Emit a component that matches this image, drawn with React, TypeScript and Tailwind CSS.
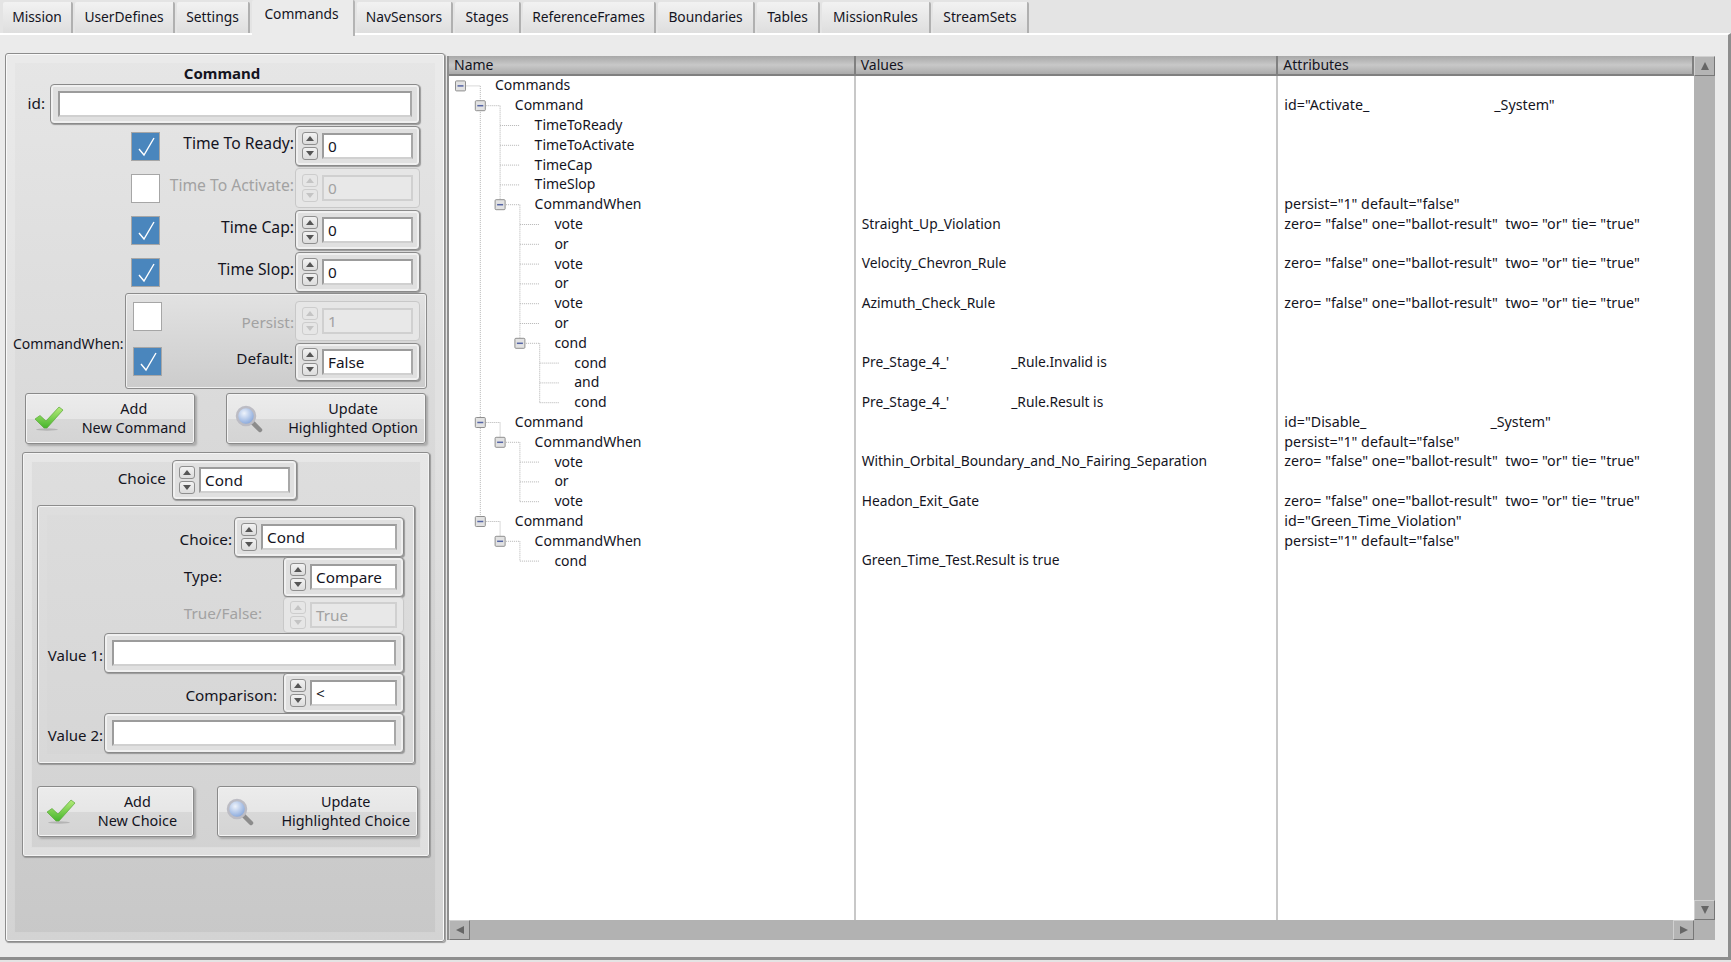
import type { ReactNode } from "react"

const tabs = [
  { label: "Mission", width: "w-[70px]" },
  { label: "UserDefines", width: "w-[100px]" },
  { label: "Settings", width: "w-[73px]" },
  { label: "Commands", width: "w-[103px]", active: true },
  { label: "NavSensors", width: "w-[96px]" },
  { label: "Stages", width: "w-[66px]" },
  { label: "ReferenceFrames", width: "w-[133px]" },
  { label: "Boundaries", width: "w-[97px]" },
  { label: "Tables", width: "w-[63px]" },
  { label: "MissionRules", width: "w-[109px]" },
  { label: "StreamSets", width: "w-[96px]" },
]

const voteAttr = 'zero= "false" one="ballot-result"  two= "or" tie= "true"'
const persistAttr = 'persist="1" default="false"'

interface TreeRow {
  name: string
  depth: number
  open?: boolean
  value?: ReactNode
  attr?: ReactNode
}

function Gap({ width }: { width: number }) {
  return <span className="inline-block" style={{ width }} />
}

const rows: TreeRow[] = [
  { name: "Commands", depth: 0, open: true },
  { name: "Command", depth: 1, open: true, attr: <>id="Activate_<Gap width={125} />_System"</> },
  { name: "TimeToReady", depth: 2 },
  { name: "TimeToActivate", depth: 2 },
  { name: "TimeCap", depth: 2 },
  { name: "TimeSlop", depth: 2 },
  { name: "CommandWhen", depth: 2, open: true, attr: persistAttr },
  { name: "vote", depth: 3, value: "Straight_Up_Violation", attr: voteAttr },
  { name: "or", depth: 3 },
  { name: "vote", depth: 3, value: "Velocity_Chevron_Rule", attr: voteAttr },
  { name: "or", depth: 3 },
  { name: "vote", depth: 3, value: "Azimuth_Check_Rule", attr: voteAttr },
  { name: "or", depth: 3 },
  { name: "cond", depth: 3, open: true },
  { name: "cond", depth: 4, value: <>Pre_Stage_4_'<Gap width={62} />_Rule.Invalid is</> },
  { name: "and", depth: 4 },
  { name: "cond", depth: 4, value: <>Pre_Stage_4_'<Gap width={62} />_Rule.Result is</> },
  { name: "Command", depth: 1, open: true, attr: <>id="Disable_<Gap width={124} />_System"</> },
  { name: "CommandWhen", depth: 2, open: true, attr: persistAttr },
  { name: "vote", depth: 3, value: "Within_Orbital_Boundary_and_No_Fairing_Separation", attr: voteAttr },
  { name: "or", depth: 3 },
  { name: "vote", depth: 3, value: "Headon_Exit_Gate", attr: voteAttr },
  { name: "Command", depth: 1, open: true, attr: 'id="Green_Time_Violation"' },
  { name: "CommandWhen", depth: 2, open: true, attr: persistAttr },
  { name: "cond", depth: 3, value: "Green_Time_Test.Result is true" },
]

const ROW_H = 19.8
const INDENT = 19.8
const BOX_X = 11.5

function TreeLines() {
  const cy = (i: number) => ROW_H / 2 + ROW_H * i
  const lines: ReactNode[] = []
  rows.forEach((row, i) => {
    const x = BOX_X + INDENT * row.depth
    lines.push(<line key={`h${i}`} x1={x} y1={cy(i)} x2={x + 20} y2={cy(i)} />)
    if (!row.open) return
    let last = i
    for (let j = i + 1; j < rows.length && rows[j].depth > row.depth; j++) {
      if (rows[j].depth === row.depth + 1) last = j
    }
    lines.push(<line key={`v${i}`} x1={x + INDENT} y1={cy(i)} x2={x + INDENT} y2={cy(last)} />)
  })
  return (
    <svg className="absolute left-0 top-0" width="300" height="520">
      <g stroke="#b4b4b4" strokeWidth="1" strokeDasharray="1 1">{lines}</g>
      {rows.map((row, i) =>
        row.open ? (
          <g key={i}>
            <rect x={BOX_X + INDENT * row.depth - 5} y={cy(i) - 5} width="10" height="10" rx="1" fill="#e2e2e2" stroke="#8f8f8f" />
            <line x1={BOX_X + INDENT * row.depth - 3} y1={cy(i)} x2={BOX_X + INDENT * row.depth + 3} y2={cy(i)} stroke="#5565a5" strokeWidth="1.5" />
          </g>
        ) : null
      )}
    </svg>
  )
}

function Arrows({ disabled }: { disabled?: boolean }) {
  const box = disabled
    ? "border-[#cdcdcd] bg-[#e6e6e6]"
    : "border-[#8f8f8f] bg-gradient-to-b from-[#f2f2f2] to-[#dcdcdc]"
  const fill = disabled ? "#c4c4c4" : "#555555"
  return (
    <div className="flex w-[16px] shrink-0 flex-col gap-[2px]">
      <div className={`flex h-[13px] items-center justify-center rounded-[3px] border ${box}`}>
        <svg width="8" height="5"><path d="M4 0 L8 5 L0 5 Z" fill={fill} /></svg>
      </div>
      <div className={`flex h-[13px] items-center justify-center rounded-[3px] border ${box}`}>
        <svg width="8" height="5"><path d="M0 0 L8 0 L4 5 Z" fill={fill} /></svg>
      </div>
    </div>
  )
}

function Field({ value, disabled, className = "" }: { value?: string; disabled?: boolean; className?: string }) {
  return (
    <div
      className={`flex h-[26px] items-center border-2 pl-[4px] text-[15.3px] ${
        disabled
          ? "border-[#d0d0d0] bg-[#e8e8e8] text-[#a2a2a2]"
          : "border-[#9c9c9c] border-b-[#d0d0d0] border-r-[#a8a8a8] bg-white"
      } ${className}`}
    >
      {value}
    </div>
  )
}

function Frame({ children, disabled, className = "" }: { children: ReactNode; disabled?: boolean; className?: string }) {
  return (
    <div
      className={`flex items-center rounded-[4px] border ${
        disabled
          ? "border-[#c8c8c8] bg-[#e6e6e6]"
          : "border-[#8a8a8a] bg-[#e0e0e0] shadow-[inset_0_0_0_2px_#f0f0f0,1px_1px_1px_#999999]"
      } ${className}`}
    >
      {children}
    </div>
  )
}

function Spin({ value, disabled, className = "w-[125px]" }: { value: string; disabled?: boolean; className?: string }) {
  return (
    <Frame disabled={disabled} className={`h-full shrink-0 gap-[4px] px-[6px] ${className}`}>
      <Arrows disabled={disabled} />
      <Field value={value} disabled={disabled} className="min-w-0 flex-1" />
    </Frame>
  )
}

function TextBox({ className }: { className: string }) {
  return (
    <Frame className={`h-full shrink-0 px-[7px] ${className}`}>
      <Field className="flex-1" />
    </Frame>
  )
}

function Check({ checked, className = "" }: { checked?: boolean; className?: string }) {
  return (
    <div
      className={`flex h-[29px] w-[29px] shrink-0 items-center justify-center border border-[#a6a6a6] ${
        checked ? "bg-[#4a86bd]" : "bg-white"
      } ${className}`}
    >
      {checked && (
        <svg width="24" height="24" viewBox="0 0 24 24" fill="none" stroke="#ffffff" strokeWidth="1.4">
          <path d="M5 15 L10 21 L20 4" />
        </svg>
      )}
    </div>
  )
}

function GreenCheck() {
  return (
    <svg width="30" height="26" viewBox="0 0 30 26">
      <defs>
        <linearGradient id="gc" x1="0" y1="0" x2="0" y2="1">
          <stop offset="0" stopColor="#b6ec7a" />
          <stop offset="1" stopColor="#46b52c" />
        </linearGradient>
      </defs>
      <ellipse cx="13" cy="23.5" rx="11" ry="1.2" fill="#b4b4b4" />
      <path d="M1 13 L6 9.5 L12 15 L25 1 L29 4 L13 22 L10 22 Z" fill="url(#gc)" stroke="#5aa83a" strokeWidth="0.7" />
    </svg>
  )
}

function Magnifier() {
  return (
    <svg width="30" height="28" viewBox="0 0 30 28">
      <defs>
        <radialGradient id="mg" cx="0.4" cy="0.35" r="0.7">
          <stop offset="0" stopColor="#eef3fb" />
          <stop offset="1" stopColor="#7c9fd8" />
        </radialGradient>
      </defs>
      <path d="M17 17 L25 25" stroke="#8c8c8c" strokeWidth="4.5" strokeLinecap="round" />
      <circle cx="11" cy="11" r="9" fill="url(#mg)" stroke="#bcbcc4" strokeWidth="2.5" />
    </svg>
  )
}

function ActionButton({
  icon,
  top,
  bottom,
  className,
}: {
  icon: ReactNode
  top: string
  bottom: string
  className: string
}) {
  return (
    <div
      className={`flex h-[51px] shrink-0 items-center rounded-[3px] border border-[#8a8a8a] bg-[linear-gradient(#ececec_0%,#e6e6e6_52%,#d8d8d8_52%,#d4d4d4_100%)] pl-[8px] text-[14.4px] shadow-[inset_0_0_0_1px_#f4f4f4,2px_2px_2px_#aaaaaa] ${className}`}
    >
      {icon}
      <div className="ml-auto flex flex-col items-center leading-[18.6px]">
        <span>{top}</span>
        <span>{bottom}</span>
      </div>
    </div>
  )
}

function TimeRow({ label, checked, disabled }: { label: string; checked?: boolean; disabled?: boolean }) {
  return (
    <div className="flex h-[40px] items-center">
      <Check checked={checked} className="ml-[125px]" />
      <span className={`flex-1 pb-[5px] pr-[1px] text-right text-[15.7px] ${disabled ? "text-[#a2a2a2]" : ""}`}>{label}</span>
      <Spin value="0" disabled={disabled} />
    </div>
  )
}

function ScrollButton({ dir }: { dir: "up" | "down" | "left" | "right" }) {
  const shape = {
    up: "M5 1 L9 9 L1 9 Z",
    down: "M1 1 L9 1 L5 9 Z",
    left: "M1 5 L9 1 L9 9 Z",
    right: "M1 1 L9 5 L1 9 Z",
  }[dir]
  return (
    <div className="flex h-[20px] w-[21px] shrink-0 items-center justify-center border border-[#d0d0d0] border-b-[#777777] border-r-[#777777] bg-[#b4b4b4]">
      <svg width="10" height="10"><path d={shape} fill="#666666" /></svg>
    </div>
  )
}

export default function App() {
  return (
    <div className="flex h-[962px] w-[1731px] flex-col overflow-hidden bg-[#e4e4e4] font-['Noto_Sans',sans-serif] text-[14px] text-[#14141e]">
      <div className="flex h-[33px] shrink-0 items-end gap-[2px] pl-[3px] text-[13.8px]">
        {tabs.map((t) =>
          t.active ? (
            <div
              key={t.label}
              className={`relative z-10 -mb-[3px] flex h-[36px] items-center justify-center rounded-t-[2px] border-r-2 border-[#b4b4b4] bg-[#ebebeb] pb-[7px] pr-[2px] ${t.width}`}
            >
              {t.label}
            </div>
          ) : (
            <div
              key={t.label}
              className={`flex h-[31px] items-center justify-center rounded-t-[2px] border-r-2 border-[#b0b0b0] bg-gradient-to-b from-[#f2f2f2] to-[#dedede] pb-[1px] ${t.width}`}
            >
              {t.label}
            </div>
          )
        )}
      </div>

      <div className="flex h-[927px] shrink-0 gap-[2px] border-b-[3px] border-r-[3px] border-t-2 border-[#8e8e8e] border-t-white bg-[#ebebeb] pl-[5px] pt-[18px]">
        {/* command form */}
        <div className="flex h-[889px] w-[440px] shrink-0 flex-col rounded-[3px] border border-[#8c8c8c] bg-gradient-to-b from-[#e6e6e6] to-[#c8c8c8] text-[15.3px] shadow-[inset_0_0_0_1px_#fafafa,inset_0_0_0_8px_#ffffff08,inset_0_0_0_9px_#ffffff30,1px_1px_1px_#999999]">
          <div className="mt-[9px] h-[21px] pr-[6px] text-center text-[15px] font-bold leading-[21px]">Command</div>

          <div className="flex h-[40px] items-center">
            <span className="w-[39px] pb-[2px] text-right">id:</span>
            <TextBox className="ml-[5px] w-[370px]" />
          </div>

          <div className="mt-[2px] flex w-[414px] flex-col gap-[2px]">
            <TimeRow label="Time To Ready:" checked />
            <TimeRow label="Time To Activate:" disabled />
            <TimeRow label="Time Cap:" checked />
            <TimeRow label="Time Slop:" checked />
          </div>

          <div className="mt-[1px] flex">
            <span className="ml-[7px] w-[112px] self-center pt-[5px] text-[14px]">CommandWhen:</span>
            <div className="flex h-[96px] w-[302px] flex-col gap-[2px] rounded-[3px] border border-[#8c8c8c] bg-gradient-to-b from-[#e2e2e2] to-[#cccccc] pt-[7px] shadow-[inset_0_0_0_1px_#f0f0f0]">
              <div className="flex h-[40px] items-start">
                <Check className="ml-[7px] mt-px" />
                <span className="flex-1 self-center pt-[2px] pr-[1px] text-right text-[#a2a2a2]">Persist:</span>
                <Spin value="1" disabled />
                <div className="w-[6px]" />
              </div>
              <div className="flex h-[38px] items-center">
                <Check checked className="mb-[2px] ml-[7px]" />
                <span className="flex-1 pb-[8px] pr-[2px] text-right">Default:</span>
                <Spin value="False" />
                <div className="w-[6px]" />
              </div>
            </div>
          </div>

          <div className="ml-[19px] mt-[4px] flex gap-[31px]">
            <ActionButton icon={<GreenCheck />} top="Add" bottom="New Command" className="w-[170px] pr-[8px]" />
            <ActionButton icon={<Magnifier />} top="Update" bottom="Highlighted Option" className="w-[200px] pr-[7px]" />
          </div>

          {/* choice group */}
          <div className="ml-[16px] mt-[8px] flex h-[405px] w-[408px] flex-col rounded-[3px] border border-[#8c8c8c] bg-gradient-to-b from-[#dedede] to-[#d2d2d2] pt-[7px] shadow-[inset_0_0_0_1px_#f4f4f4,inset_0_0_0_8px_#ffffff10,inset_0_0_0_9px_#ffffff40,1px_1px_1px_#999999]">
            <div className="flex h-[40px] items-center">
              <span className="w-[143px] pb-[4px] text-right">Choice</span>
              <Spin value="Cond" className="ml-[6px] w-[125px]" />
            </div>

            <div className="ml-[14px] mt-[5px] flex h-[259px] w-[378px] flex-col rounded-[3px] border border-[#8c8c8c] bg-gradient-to-b from-[#dcdcdc] to-[#d6d6d6] pr-[10px] pt-[11px] shadow-[inset_0_0_0_1px_#f4f4f4,inset_0_0_0_9px_#ffffff10,1px_1px_1px_#999999]">
              <div className="flex h-[40px] items-center justify-end">
                <span className="mr-[2px] pt-[4px]">Choice:</span>
                <Spin value="Cond" className="w-[170px]" />
              </div>
              <div className="flex h-[40px] items-center justify-end">
                <span className="mr-[61px] pb-[1px]">Type:</span>
                <Spin value="Compare" className="w-[121px]" />
              </div>
              <div className="flex h-[36px] items-center justify-end">
                <span className="mr-[21px] pb-[3px] text-[#a2a2a2]">True/False:</span>
                <Spin value="True" disabled className="w-[121px]" />
              </div>
              <div className="flex h-[40px] items-center justify-end">
                <span className="mr-px pt-[4px] text-[15px]">Value 1:</span>
                <TextBox className="w-[300px]" />
              </div>
              <div className="flex h-[40px] items-center justify-end">
                <span className="mr-[6px] pt-[4px]">Comparison:</span>
                <Spin value="<" className="w-[121px]" />
              </div>
              <div className="flex h-[40px] items-center justify-end">
                <span className="mr-px pt-[4px] text-[15px]">Value 2:</span>
                <TextBox className="w-[300px]" />
              </div>
            </div>

            <div className="ml-[14px] mt-[22px] flex gap-[23px]">
              <ActionButton icon={<GreenCheck />} top="Add" bottom="New Choice" className="w-[157px] pr-[16px]" />
              <ActionButton icon={<Magnifier />} top="Update" bottom="Highlighted Choice" className="w-[201px] pr-[7px]" />
            </div>
          </div>
        </div>

        {/* tree view */}
        <div className="mt-[3px] flex h-[884px] w-[1268px] shrink-0 flex-col border-l-2 border-[#8e8e8e]">
          <div className="flex h-[20px] shrink-0">
            {[
              { label: "Name", width: "w-[407px]" },
              { label: "Values", width: "w-[423px]" },
              { label: "Attributes", width: "w-[416px]" },
            ].map((h) => (
              <div
                key={h.label}
                className={`flex items-center border-b-2 border-r-2 border-[#808080] bg-gradient-to-b from-[#a8a8a8] via-[#c8c8c8] to-[#ababab] pb-[2px] pl-[5px] ${h.width}`}
              >
                {h.label}
              </div>
            ))}
            <ScrollButton dir="up" />
          </div>
          <div className="flex min-h-0 flex-1">
            <div className="relative w-[407px] border-r-2 border-[#c8c8c8] bg-white">
              <TreeLines />
              {rows.map((row, i) => (
                <div
                  key={i}
                  className="relative flex h-[19.8px] items-center pb-[2px]"
                  style={{ paddingLeft: 46 + row.depth * INDENT }}
                >
                  {row.name}
                </div>
              ))}
            </div>
            <div className="w-[423px] border-r-2 border-[#c8c8c8] bg-white pl-[6px] text-[13.8px]">
              {rows.map((row, i) => (
                <div key={i} className="flex h-[19.8px] items-center whitespace-pre pb-[1px]">{row.value}</div>
              ))}
            </div>
            <div className="w-[416px] bg-white pl-[6px] text-[14.25px]">
              {rows.map((row, i) => (
                <div key={i} className="flex h-[19.8px] items-center whitespace-pre pb-[2px]">{row.attr}</div>
              ))}
            </div>
            <div className="flex w-[21px] shrink-0 flex-col justify-end bg-[#b2b2b2]">
              <ScrollButton dir="down" />
            </div>
          </div>
          <div className="flex h-[20px] shrink-0 bg-[#b2b2b2]">
            <ScrollButton dir="left" />
            <div className="flex-1" />
            <ScrollButton dir="right" />
            <div className="w-[21px]" />
          </div>
        </div>
      </div>
    </div>
  )
}
